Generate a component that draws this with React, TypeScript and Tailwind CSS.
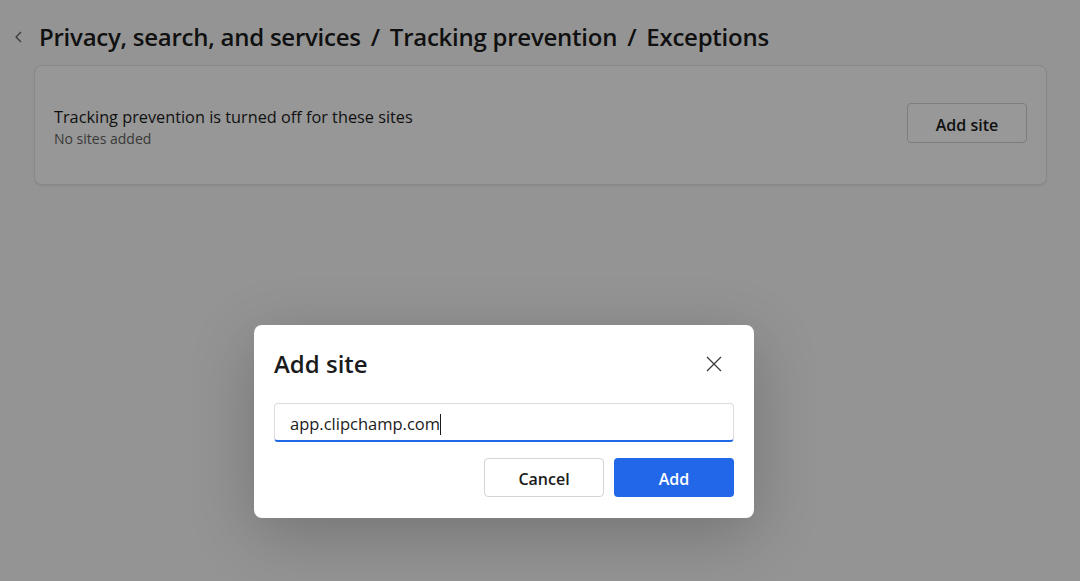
import React from "react";

export default function App() {
  const font = { fontFamily: '"Segoe UI", "Open Sans", "Noto Sans", sans-serif' };
  return (
    <div className="relative w-[1080px] h-[581px] overflow-hidden bg-[#f7f7f7]" style={font}>
      <div className="flex items-center h-[40px] mt-[17px] pl-[12px]">
        <svg width="14" height="14" viewBox="0 0 14 14" className="mr-[13px]">
          <path d="M9 2 L4 7 L9 12" fill="none" stroke="#5a5a5a" strokeWidth="1.2" />
        </svg>
        <div className="flex items-center text-[24px] font-semibold text-[#1b1b1b] tracking-[-0.25px]">
          <span>Privacy, search, and services</span>
          <span className="mx-[10px]">/</span>
          <span>Tracking prevention</span>
          <span className="mx-[10px]">/</span>
          <span>Exceptions</span>
        </div>
      </div>
      <div className="ml-[34px] w-[1013px] mt-[8px] h-[120px] rounded-[8px] border border-[#e3e3e3] bg-[#fcfcfc] shadow-[0_1px_2px_rgba(0,0,0,0.08)] flex items-start justify-between pl-[19px] pr-[19px]">
        <div className="flex flex-col mt-[40px]">
          <span className="text-[16.3px] leading-[22px] text-[#1b1b1b]">Tracking prevention is turned off for these sites</span>
          <span className="text-[14px] leading-[20px] mt-[1px] text-[#616161]">No sites added</span>
        </div>
        <button className="mt-[37px] w-[120px] h-[40px] pt-[3px] rounded-[4px] border border-[#d1d1d1] bg-[#fdfdfd] text-[16px] font-semibold text-[#1b1b1b]">
          Add site
        </button>
      </div>

      <div className="absolute inset-0 bg-black/40" />

      <div className="absolute left-[254px] top-[325px] w-[500px] h-[193px] rounded-[8px] bg-white shadow-[0_16px_64px_rgba(0,0,0,0.22)] px-[20px] pt-[19px] flex flex-col">
        <div className="flex items-center justify-between h-[40px]">
          <span className="text-[24px] font-semibold text-[#1b1b1b]">Add site</span>
          <svg width="16" height="16" viewBox="0 0 16 16" className="mr-[12px]">
            <path d="M1 1 L15 15 M15 1 L1 15" stroke="#3a3a3a" strokeWidth="1.3" fill="none" />
          </svg>
        </div>
        <div className="mt-[19px] h-[39px] rounded-[4px] border border-[#dcdcdc] border-b-2 border-b-[#1f69e6] flex items-center pl-[15px] pt-[4px] text-[16.5px] text-[#1b1b1b]">
          <span>app.clipchamp.com</span>
          <span className="inline-block w-[1px] h-[21px] bg-[#1b1b1b]" />
        </div>
        <div className="flex justify-end gap-[10px] mt-[16px]">
          <button className="w-[120px] h-[39px] pt-[2px] rounded-[4px] border border-[#d5d5d5] bg-white text-[16px] font-semibold text-[#1b1b1b]">
            Cancel
          </button>
          <button className="w-[120px] h-[39px] pt-[2px] rounded-[4px] bg-[#2167e8] text-[16px] font-semibold text-white">
            Add
          </button>
        </div>
      </div>
    </div>
  );
}
